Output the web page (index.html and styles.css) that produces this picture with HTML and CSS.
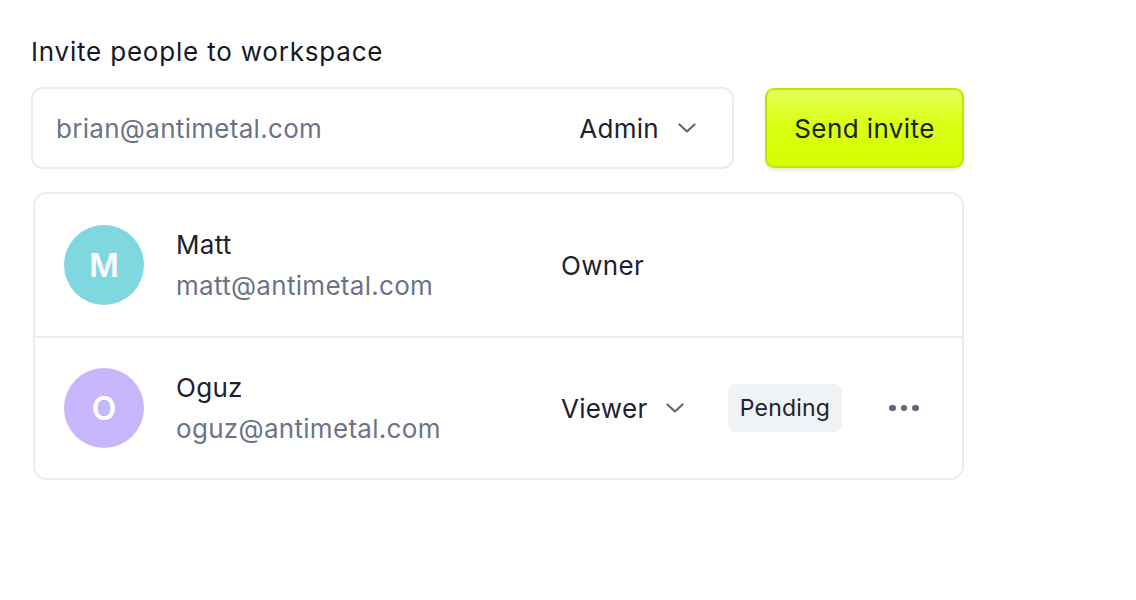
FILE: index.html
```html
<!DOCTYPE html>
<html lang="en">
<head>
<meta charset="utf-8">
<title>Invite people</title>
<link rel="stylesheet" href="styles.css">
</head>
<body>
<main class="panel">
  <h1 class="title">Invite people to workspace</h1>
  <div class="invite-row">
    <div class="invite-input">
      <span class="placeholder">brian@antimetal.com</span>
      <span class="role-select">Admin
        <svg class="chev" width="18" height="10" viewBox="0 0 18 10"><path d="M1.5 1.5 L9 8.5 L16.5 1.5" fill="none" stroke="currentColor" stroke-width="2.2" stroke-linecap="round" stroke-linejoin="round"/></svg>
      </span>
    </div>
    <button class="send-btn">Send invite</button>
  </div>
  <section class="members">
    <div class="member">
      <div class="avatar avatar-m">M</div>
      <div class="info">
        <div class="name">Matt</div>
        <div class="email">matt@antimetal.com</div>
      </div>
      <div class="role">Owner</div>
    </div>
    <div class="member">
      <div class="avatar avatar-o">O</div>
      <div class="info">
        <div class="name">Oguz</div>
        <div class="email">oguz@antimetal.com</div>
      </div>
      <div class="role role-dd">Viewer
        <svg class="chev" width="18" height="10" viewBox="0 0 18 10"><path d="M1.5 1.5 L9 8.5 L16.5 1.5" fill="none" stroke="currentColor" stroke-width="2.2" stroke-linecap="round" stroke-linejoin="round"/></svg>
      </div>
      <span class="badge">Pending</span>
      <span class="more"><i></i><i></i><i></i></span>
    </div>
  </section>
</main>
</body>
</html>
```
FILE: styles.css
```css
* { box-sizing: border-box; }
html, body { margin: 0; background: #ffffff; }
body {
  font-family: Inter, "Noto Sans", "Liberation Sans", sans-serif;
  color: #1d222e;
  letter-spacing: 0.3px;
}
.panel {
  padding: 34px 0 0 31px;
  width: 964px;
}
.title {
  margin: 0;
  font-size: 26px;
  line-height: 36px;
  font-weight: 400;
  letter-spacing: 0.8px;
  color: #151a26;
}
.invite-row {
  display: flex;
  align-items: center;
  gap: 31px;
  margin-top: 17px;
}
.invite-input {
  width: 703px;
  height: 82px;
  border: 2px solid #e9edf2;
  border-radius: 12px;
  display: flex;
  align-items: center;
  justify-content: space-between;
  padding: 0 36px 0 23px;
  font-size: 26px;
}
.placeholder { color: #6b7486; }
.role-select {
  display: flex;
  align-items: center;
  gap: 19px;
  color: #1d222e;
}
.chev { color: #5f6879; display: block; }
.send-btn {
  width: 199px;
  height: 80px;
  border: 2px solid #c2e400;
  border-radius: 9px;
  background: linear-gradient(#e6ff5c 0%, #d9ff14 45%, #d4ff00 100%);
  box-shadow: 0 2px 3px rgba(120, 140, 0, 0.18);
  font-family: inherit;
  font-size: 26px;
  font-weight: 400;
  letter-spacing: 0.4px;
  color: #1b2010;
  padding: 0;
}
.members {
  margin: 23px 0 0 2px;
  width: 931px;
  border: 2px solid #e9edf2;
  border-radius: 14px;
}
.member {
  display: flex;
  align-items: center;
  height: 142px;
  padding-left: 29px;
}
.member + .member {
  border-top: 2px solid #e9edf2;
}
.avatar {
  width: 80px;
  height: 80px;
  border-radius: 50%;
  flex: none;
  display: flex;
  align-items: center;
  justify-content: center;
  color: #ffffff;
  font-size: 32px;
  font-weight: 600;
  letter-spacing: 0;
}
.avatar-m { background: #7fd8df; }
.avatar-o { background: #c6b6fb; }
.info {
  margin-left: 32px;
  width: 385px;
  font-size: 26px;
  line-height: 41px;
}
.name { color: #1d222e; }
.email { color: #6b7486; }
.role {
  font-size: 26px;
  color: #1d222e;
  width: 167px;
  flex: none;
}
.role-dd {
  display: flex;
  align-items: center;
  gap: 19px;
}
.badge {
  height: 48px;
  width: 114px;
  flex: none;
  display: flex;
  align-items: center;
  justify-content: center;
  background: #f0f3f6;
  border-radius: 8px;
  font-size: 23px;
  letter-spacing: 0.2px;
  color: #1d222e;
}
.more {
  margin-left: 47px;
  display: flex;
  gap: 5px;
}
.more i {
  width: 6.5px;
  height: 6.5px;
  border-radius: 50%;
  background: #5f6879;
  display: block;
}
```
